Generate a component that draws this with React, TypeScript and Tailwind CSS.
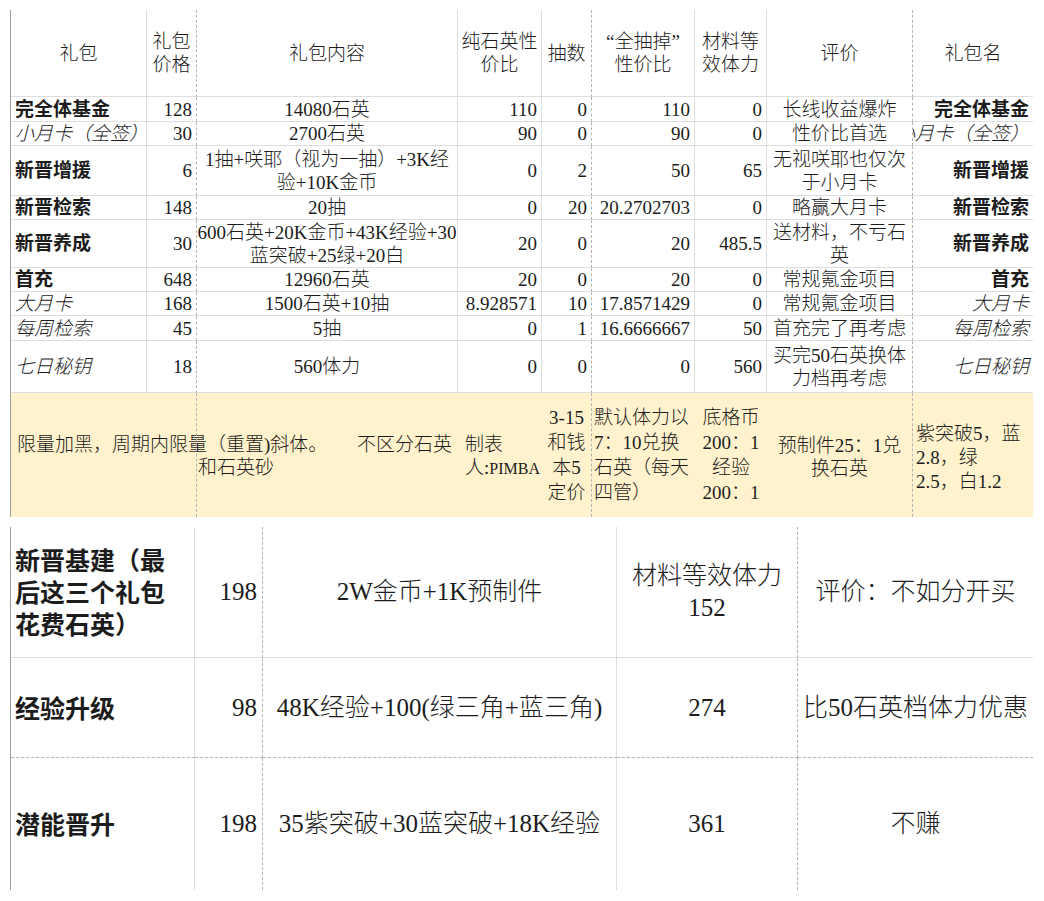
import clsx from 'clsx'

// spreadsheet-ish gridlines
const RS = '[border-right:1px_solid_#dedede]'
const RD = '[border-right:1px_dashed_#b3b3b3]'
const BS = '[border-bottom:1px_solid_#dedede]'
const BD = '[border-bottom:1px_dashed_#b3b3b3]'

const topCols = 'grid grid-cols-[136px_50px_261px_84px_50px_103px_72px_146px_120px]'
const bottomCols = 'grid grid-cols-[184px_68px_354px_181px_235px]'

const topRight = [RS, RD, RS, RS, RD, RS, RS, RD, '']
const topAlign = ['l', 'r', 'c', 'r', 'r', 'r', 'r', 'c', 'r'] as const

const alignCls = {
  l: 'justify-start text-left pl-[4px]',
  c: 'justify-center text-center px-[2px]',
  r: 'justify-end text-right pr-[4px]',
}

const header = ['礼包', '礼包\n价格', '礼包内容', '纯石英性\n价比', '抽数', '“全抽掉”\n性价比', '材料等\n效体力', '评价', '礼包名']

const rows = [
  { h: 'h-[25px]', s: 'b', v: ['完全体基金', '128', '14080石英', '110', '0', '110', '0', '长线收益爆炸', '完全体基金'] },
  { h: 'h-[24px]', s: 'i', v: ['小月卡（全签）', '30', '2700石英', '90', '0', '90', '0', '性价比首选', '小月卡（全签）'] },
  { h: 'h-[50px]', s: 'b', v: ['新晋增援', '6', '1抽+咲耶（视为一抽）+3K经\n验+10K金币', '0', '2', '50', '65', '无视咲耶也仅次\n于小月卡', '新晋增援'] },
  { h: 'h-[24px]', s: 'b', v: ['新晋检索', '148', '20抽', '0', '20', '20.2702703', '0', '略赢大月卡', '新晋检索'] },
  { h: 'h-[48px]', s: 'b', v: ['新晋养成', '30', '600石英+20K金币+43K经验+30\n蓝突破+25绿+20白', '20', '0', '20', '485.5', '送材料，不亏石\n英', '新晋养成'] },
  { h: 'h-[24px]', s: 'b', v: ['首充', '648', '12960石英', '20', '0', '20', '0', '常规氪金项目', '首充'] },
  { h: 'h-[24px]', s: 'i', v: ['大月卡', '168', '1500石英+10抽', '8.928571', '10', '17.8571429', '0', '常规氪金项目', '大月卡'] },
  { h: 'h-[25px]', s: 'i', v: ['每周检索', '45', '5抽', '0', '1', '16.6666667', '50', '首充完了再考虑', '每周检索'] },
  { h: 'h-[52px]', s: 'i', v: ['七日秘钥', '18', '560体力', '0', '0', '0', '560', '买完50石英换体\n力档再考虑', '七日秘钥'] },
]

const bottomRows = [
  {
    h: 'h-[131px]',
    b: BS,
    v: ['新晋基建（最\n后这三个礼包\n花费石英）', '198', '2W金币+1K预制件', '材料等效体力\n152', '评价：不如分开买'],
  },
  { h: 'h-[100px]', b: BD, v: ['经验升级', '98', '48K经验+100(绿三角+蓝三角)', '274', '比50石英档体力优惠'] },
  { h: 'h-[132px]', b: '', v: ['潜能晋升', '198', '35紫突破+30蓝突破+18K经验', '361', '不赚'] },
]
const bottomRight = [RS, RD, RS, RD, '']

export default function App() {
  return (
    <div className="min-h-screen bg-white pl-[10px] pt-[10px] font-['Liberation_Serif','Noto_Sans_CJK_SC',serif] font-light text-[#1c1c1c]">
      {/* price table */}
      <div className="w-[1023px] border-l border-l-[#9e9e9e] text-[19px] leading-[23px]">
        <div className={topCols}>
          {header.map((t, i) => (
            <div
              key={i}
              className={clsx('flex h-[87px] items-center justify-center whitespace-pre text-center', BS, topRight[i])}
            >
              {t}
            </div>
          ))}
        </div>

        {rows.map((r, ri) => (
          <div key={ri} className={topCols}>
            {r.v.map((t, i) => (
              <div
                key={i}
                className={clsx(
                  'flex items-center overflow-hidden whitespace-pre',
                  r.h,
                  BS,
                  topRight[i],
                  alignCls[topAlign[i]],
                  (i === 0 || i === 8) && r.s === 'b' && 'font-bold',
                  (i === 0 || i === 8) && r.s === 'i' && 'italic',
                )}
              >
                {t}
              </div>
            ))}
          </div>
        ))}

        {/* notes row */}
        <div className={clsx(topCols, 'h-[124px] bg-[#fff2cc]')}>
          <div className="flex items-center whitespace-nowrap pb-[21px] pl-[6px]">限量加黑，周期内限量（重置)斜体。</div>
          <div className={RD} />
          <div className="flex flex-col justify-center pt-[2px]">
            <div className="pr-[6px] text-right">不区分石英</div>
            <div className="pl-[1px]">和石英砂</div>
          </div>
          <div className="flex items-center whitespace-pre pl-[7px] pt-[2px]">
            <div>
              制表
              <br />
              人:<span className="text-[16px]">PIMBA</span>
            </div>
          </div>
          <div className={clsx('flex items-center justify-center whitespace-pre text-center leading-[25px]', RD)}>
            {'3-15\n和钱\n本5\n定价'}
          </div>
          <div className="flex items-center whitespace-pre pl-[2px] leading-[25px]">{'默认体力以\n7：10兑换\n石英（每天\n四管）'}</div>
          <div className="flex items-center justify-center whitespace-pre text-center leading-[25px]">
            {'底格币\n200：1\n经验\n200：1'}
          </div>
          <div className={clsx('flex items-center justify-center whitespace-pre pt-[3px] text-center', RD)}>
            {'预制件25：1兑\n换石英'}
          </div>
          <div className="flex items-center whitespace-pre pl-[3px] pt-[6px] leading-[24px]">
            {'紫突破5，蓝\n2.8，绿\n2.5，白1.2'}
          </div>
        </div>
      </div>

      {/* last three packs */}
      <div className="mt-[10px] w-[1023px] border-l border-l-[#9e9e9e] text-[25px] leading-[32px]">
        {bottomRows.map((r, ri) => (
          <div key={ri} className={bottomCols}>
            {r.v.map((t, i) => (
              <div
                key={i}
                className={clsx(
                  'flex items-center whitespace-pre',
                  r.h,
                  r.b,
                  bottomRight[i],
                  i === 0 && 'justify-start pl-[4px] pt-[4px] font-bold',
                  i === 1 && 'justify-end pr-[5px]',
                  i > 1 && 'justify-center text-center',
                )}
              >
                {t}
              </div>
            ))}
          </div>
        ))}
      </div>
    </div>
  )
}
